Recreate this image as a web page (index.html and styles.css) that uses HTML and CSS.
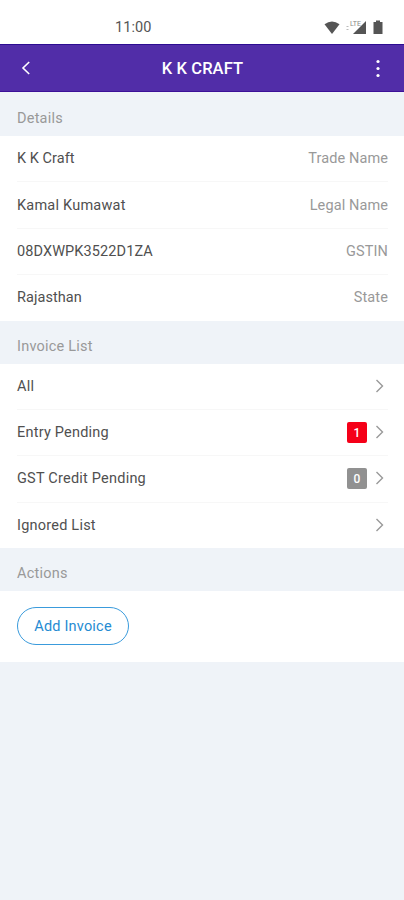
FILE: index.html
```html
<!DOCTYPE html>
<html lang="en">
<head>
<meta charset="utf-8">
<title>K K Craft</title>
<link rel="stylesheet" href="styles.css">
</head>
<body>
<div class="status">
  <span class="time">11:00</span>
  <svg class="status-icons" width="64" height="20" viewBox="0 0 64 20" fill="#555">
    <path d="M4.500 6.200Q12 .8 19.500 6.200L12 16Z"/>
    <path d="M46 3V16H33Z"/>
    <path d="M53.500 4H56V2.500H60V4H62.500V16H53.500Z"/>
    <path d="M26.500 8.500h2M26.500 11.500h2" stroke="#bbb" fill="none"/>
    <text x="30" y="8" class="lte">LTE</text>
  </svg>
</div>
<header class="bar">
  <svg class="back" width="12" height="16" viewBox="0 0 12 16"><path d="M9.200 2L3 8L9.200 14"/></svg>
  <h1>K K CRAFT</h1>
  <svg class="more" width="6" height="20" viewBox="0 0 6 20" fill="#fff"><circle cx="3" cy="3.500" r="1.600"/><circle cx="3" cy="10.500" r="1.600"/><circle cx="3" cy="17.500" r="1.600"/></svg>
</header>
<main>
  <h2 class="first">Details</h2>
  <section class="list">
    <div class="row"><span class="tight">K K Craft</span><span class="label">Trade Name</span></div>
    <div class="row"><span>Kamal Kumawat</span><span class="label">Legal Name</span></div>
    <div class="row"><span class="code">08DXWPK3522D1ZA</span><span class="label">GSTIN</span></div>
    <div class="row"><span class="tight">Rajasthan</span><span class="label">State</span></div>
  </section>
  <h2>Invoice List</h2>
  <section class="list links">
    <div class="row"><span>All</span><svg class="chev" width="10" height="14" viewBox="0 0 10 14"><path d="M1.500 1L7.500 7L1.500 13"/></svg></div>
    <div class="row"><span>Entry Pending</span><b class="badge red">1</b><svg class="chev" width="10" height="14" viewBox="0 0 10 14"><path d="M1.500 1L7.500 7L1.500 13"/></svg></div>
    <div class="row"><span>GST Credit Pending</span><b class="badge">0</b><svg class="chev" width="10" height="14" viewBox="0 0 10 14"><path d="M1.500 1L7.500 7L1.500 13"/></svg></div>
    <div class="row"><span>Ignored List</span><svg class="chev" width="10" height="14" viewBox="0 0 10 14"><path d="M1.500 1L7.500 7L1.500 13"/></svg></div>
  </section>
  <h2>Actions</h2>
  <section class="actions"><button>Add Invoice</button></section>
</main>
</body>
</html>
```
FILE: styles.css
```css
* { box-sizing: border-box; }
body { margin: 0; height: 900px; background: #eff3f8; font: 14.5px/20px Roboto, sans-serif; letter-spacing: .22px; color: #505050; overflow: hidden; }
.status { height: 44px; background: #fff; display: flex; align-items: center; justify-content: space-between; padding: 11px 20px 0 115px; }
.time { font-size: 14.5px; letter-spacing: .1px; color: #555; }
.lte { font: 7px Roboto, sans-serif; letter-spacing: 0; fill: #888; }
.bar { height: 48px; background: #512da8; border-top: 1px solid #2d0d91; border-bottom: 1px solid #3c1098; display: grid; grid-template-columns: 12px 1fr 6px; align-items: center; padding: 0 23px 0 20px; }
.back { fill: none; stroke: #fff; stroke-width: 1.6; }
h1 { margin: 0 2px 0 0; font-size: 16.5px; line-height: 20px; font-weight: 500; text-align: center; color: #fff; letter-spacing: .1px; padding-top: 2px; }
h2 { margin: 0; height: 43px; padding: 16px 17px 0; font-size: 14.5px; line-height: 20px; font-weight: 400; color: #999; }
h2.first { height: 44px; padding-top: 17px; }
.list { background: #fff; height: 184.500px; padding: 0 16px 0 17px; overflow: hidden; }
.list + h2 + .actions { margin-top: 0; }
.row { height: 46.400px; display: flex; align-items: center; padding-bottom: 1px; border-bottom: 1px solid #f7f7f7; }
.row:last-child { border-bottom-color: transparent; }
.row > span { padding-top: 2px; }
.row > span:first-child { margin-right: auto; }
.tight { letter-spacing: .05px; }
.code { letter-spacing: .1px; }
.label { color: #999; letter-spacing: .1px; }
.links .row { padding-right: 3px; }
.chev { fill: none; stroke: #999; stroke-width: 1.4; }
.badge { width: 20px; height: 21px; border-radius: 2px; background: #919191; color: #fff; font-size: 12px; line-height: 22px; font-weight: 500; text-align: center; margin: 1px 8px 0 0; letter-spacing: 0; }
.red { background: #f50018; }
.actions { height: 71px; background: #fff; padding: 16px 17px; }
button { display: block; width: 112px; height: 38px; padding: 2px 0 0; border: 1px solid #3a9bdc; border-radius: 19px; background: #fff; color: #258bd2; font: 14.5px/20px Roboto, sans-serif; letter-spacing: .2px; }
```
